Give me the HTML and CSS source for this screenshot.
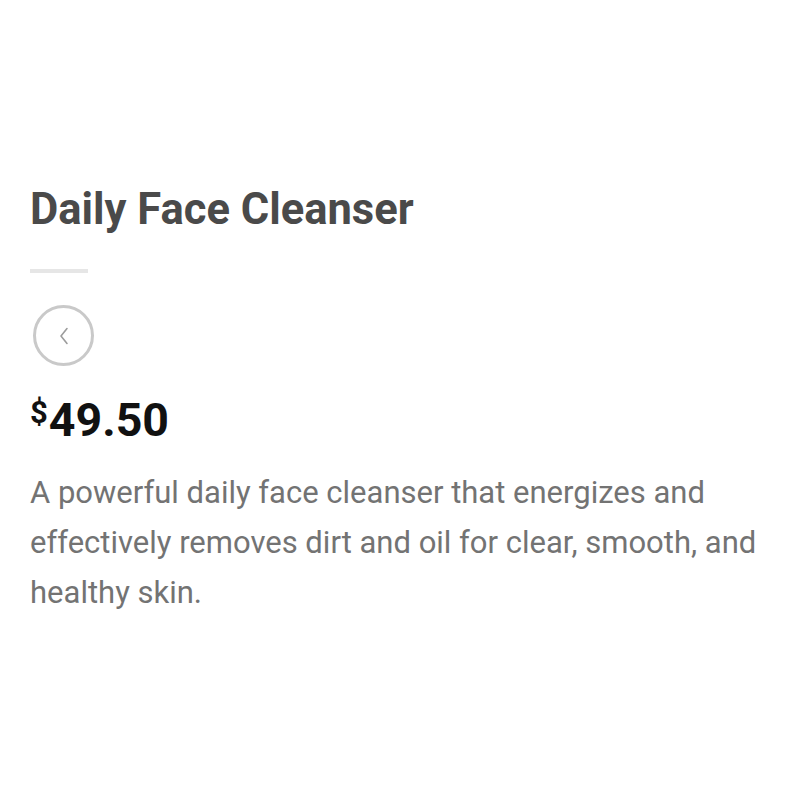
FILE: index.html
```html
<!DOCTYPE html>
<html lang="en">
<head>
  <meta charset="UTF-8" />
  <meta name="viewport" content="width=device-width, initial-scale=1.0"/>
  <title>Daily Face Cleanser</title>
  <link rel="stylesheet" href="styles.css">
</head>
<body>
  <div class="product">
    <h1 class="title">Daily Face Cleanser</h1>
    <div class="divider"></div>

    <button class="back" aria-label="Back">
      <svg width="12" height="18" viewBox="0 0 12 18">
        <path d="M9 1.5 L3 9 L9 16.5" fill="none" stroke="#9c9c9c" stroke-width="1.6" stroke-linecap="round" stroke-linejoin="round"/>
      </svg>
    </button>

    <p class="price"><span class="currency">$</span>49.50</p>

    <p class="desc">A powerful daily face cleanser that energizes and effectively removes dirt and oil for clear, smooth, and healthy skin.</p>
  </div>
</body>
</html>
```

FILE: styles.css
```css
body {
  font-family: Roboto, 'Noto Sans', sans-serif;
  background: #ffffff;
  margin: 0;
  padding: 0;
}

.product {
  padding: 184px 30px 0;
  max-width: 740px;
}

.title {
  margin: 0;
  font-size: 43.5px;
  font-weight: 700;
  color: #4a4a4a;
  line-height: 52px;
}

.divider {
  width: 58px;
  height: 4px;
  background: #e6e6e6;
  margin-top: 33px;
}

.back {
  display: flex;
  align-items: center;
  justify-content: center;
  width: 61px;
  height: 61px;
  margin: 32px 0 0 3px;
  padding: 0;
  border: 3px solid #c9c9c9;
  border-radius: 50%;
  background: transparent;
}

.price {
  margin: 20px 0 0;
  font-size: 46.5px;
  font-weight: 700;
  color: #111;
  line-height: 54px;
}

.currency {
  font-size: 31px;
  vertical-align: 13px;
  margin-right: 1px;
}

.desc {
  margin: 21px 0 0;
  font-size: 31px;
  line-height: 50px;
  color: #737373;
}
```
